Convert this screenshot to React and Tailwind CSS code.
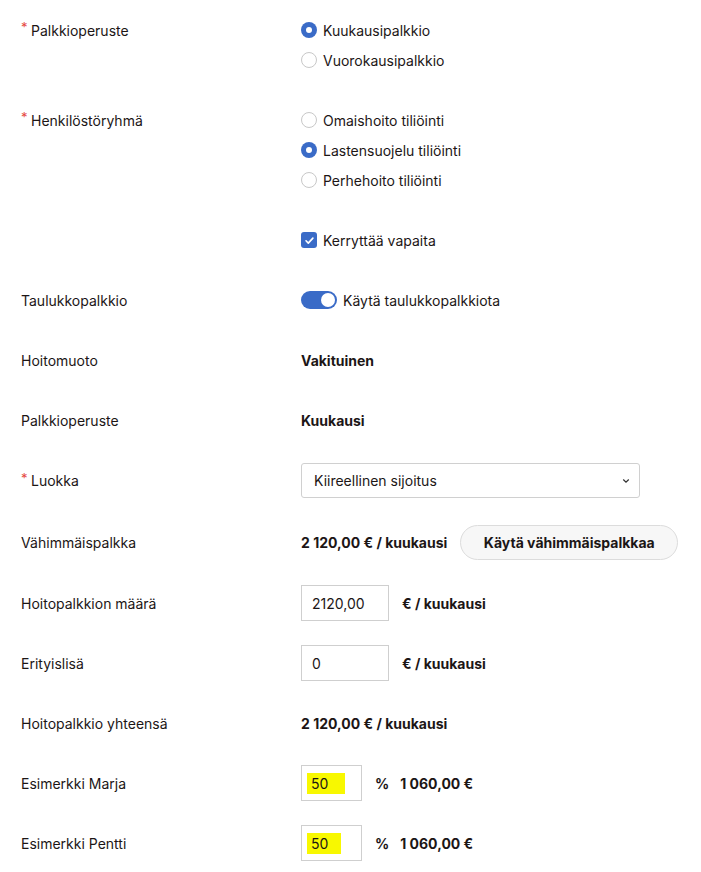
import { useState } from 'react'

const font = { fontFamily: 'Inter, "Noto Sans", sans-serif' }

function Label({ children, required }) {
  return (
    <div className="w-[280px] shrink-0 flex items-center h-[30px]">
      {required && <span className="text-[#e5483f] text-[13px] w-[10px] -mt-[4px]">*</span>}
      <span>{children}</span>
    </div>
  )
}

function Radio({ checked, label }) {
  return (
    <div className="flex items-center h-[30px]">
      {checked ? (
        <span className="w-4 h-4 rounded-full bg-[#3a6bc7] flex items-center justify-center">
          <span className="w-[6px] h-[6px] rounded-full bg-white" />
        </span>
      ) : (
        <span className="w-4 h-4 rounded-full border-[1.5px] border-[#c8c8c8] bg-white" />
      )}
      <span className="ml-[6px]">{label}</span>
    </div>
  )
}

function Row({ label, required, children, h = 'h-[60px]' }) {
  return (
    <div className={`flex items-center ${h}`}>
      <Label required={required}>{label}</Label>
      <div className="flex items-center">{children}</div>
    </div>
  )
}

export default function App() {
  const [taulukko, setTaulukko] = useState(true)

  return (
    <div className="min-h-screen bg-white text-[14px] text-[#1c1616] px-[21px]" style={font}>
      {/* Palkkioperuste */}
      <div className="flex py-[15px]">
        <Label required>Palkkioperuste</Label>
        <div>
          <Radio checked label="Kuukausipalkkio" />
          <Radio label="Vuorokausipalkkio" />
        </div>
      </div>

      {/* Henkilöstöryhmä */}
      <div className="flex py-[15px]">
        <Label required>Henkilöstöryhmä</Label>
        <div>
          <Radio label="Omaishoito tiliöinti" />
          <Radio checked label="Lastensuojelu tiliöinti" />
          <Radio label="Perhehoito tiliöinti" />
        </div>
      </div>

      <Row label="">
        <div className="flex items-center">
          <span className="w-4 h-4 rounded-[3px] bg-[#3a6bc7] flex items-center justify-center">
            <svg width="11" height="11" viewBox="0 0 12 12" fill="none">
              <path d="M2.2 6.3l2.5 2.5 5-5.4" stroke="white" strokeWidth="1.8" strokeLinecap="round" strokeLinejoin="round" />
            </svg>
          </span>
          <span className="ml-[6px]">Kerryttää vapaita</span>
        </div>
      </Row>

      <Row label="Taulukkopalkkio">
        <button
          onClick={() => setTaulukko(!taulukko)}
          className={`w-9 h-[18px] rounded-full flex items-center px-[2px] ${taulukko ? 'bg-[#3a6bc7] justify-end' : 'bg-[#c8c8c8] justify-start'}`}
        >
          <span className="w-[14px] h-[14px] rounded-full bg-white" />
        </button>
        <span className="ml-[6px]">Käytä taulukkopalkkiota</span>
      </Row>

      <Row label="Hoitomuoto">
        <span className="font-bold">Vakituinen</span>
      </Row>

      <Row label="Palkkioperuste">
        <span className="font-bold">Kuukausi</span>
      </Row>

      <Row label="Luokka" required h="h-[61px]">
        <div className="w-[339px] h-[35px] border border-[#d0d0d0] rounded-[3px] flex items-center justify-between pl-[12px] pr-[9px]">
          <span>Kiireellinen sijoitus</span>
          <svg width="8" height="6" viewBox="0 0 8 6" fill="none">
            <path d="M1.5 1.8l2.5 2.4 2.5-2.4" stroke="#333" strokeWidth="1.2" strokeLinecap="round" />
          </svg>
        </div>
      </Row>

      <Row label="Vähimmäispalkka" h="h-[62px]">
        <span className="font-bold">2 120,00 € / kuukausi</span>
        <button className="ml-[13px] w-[218px] h-[35px] rounded-full border border-[#dcdcdc] bg-[#f7f7f7] font-bold">
          Käytä vähimmäispalkkaa
        </button>
      </Row>

      <Row label="Hoitopalkkion määrä">
        <div className="w-[88px] h-[36px] border border-[#cfcfcf] flex items-center pl-[10px]">2120,00</div>
        <span className="ml-[13px] font-bold">€ / kuukausi</span>
      </Row>

      <Row label="Erityislisä">
        <div className="w-[88px] h-[36px] border border-[#cfcfcf] flex items-center pl-[10px]">0</div>
        <span className="ml-[13px] font-bold">€ / kuukausi</span>
      </Row>

      <Row label="Hoitopalkkio yhteensä">
        <span className="font-bold">2 120,00 € / kuukausi</span>
      </Row>

      <Row label="Esimerkki Marja">
        <div className="w-[61px] h-[36px] border border-[#cfcfcf] flex items-center pl-[5px]">
          <span className="bg-[#f8f800] w-[38px] h-[21px] flex items-center pl-[4px]">50</span>
        </div>
        <span className="ml-[13px] font-bold">%</span>
        <span className="ml-[11px] font-bold">1 060,00 €</span>
      </Row>

      <Row label="Esimerkki Pentti">
        <div className="w-[61px] h-[36px] border border-[#cfcfcf] flex items-center pl-[5px]">
          <span className="bg-[#f8f800] w-[34px] h-[21px] flex items-center pl-[4px]">50</span>
        </div>
        <span className="ml-[13px] font-bold">%</span>
        <span className="ml-[11px] font-bold">1 060,00 €</span>
      </Row>
    </div>
  )
}
